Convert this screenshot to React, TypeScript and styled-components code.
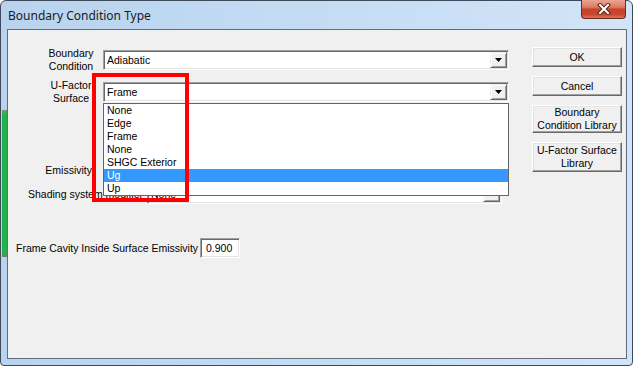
import React from 'react';
import styled, { createGlobalStyle } from 'styled-components';

const GlobalStyle = createGlobalStyle`
  html, body {
    margin: 0;
    padding: 0;
    width: 633px;
    height: 366px;
    overflow: hidden;
    background: #ffffff;
  }
  * {
    box-sizing: border-box;
  }
`;

const Window = styled.div`
  width: 633px;
  height: 366px;
  display: flex;
  flex-direction: column;
  padding-bottom: 6px;
  border: 1px solid #3d4a5a;
  border-radius: 6px 6px 4px 4px;
  background: linear-gradient(to right, #b9d3ee 0%, #c3dbf3 45%, #d2e5f8 100%);
  font-family: 'Liberation Sans', Arial, sans-serif;
  font-size: 10.5px;
  color: #000;
`;

const TitleBar = styled.div`
  height: 28px;
  display: flex;
  align-items: flex-start;
  padding-left: 7px;
`;

const Title = styled.div`
  font-family: 'Noto Sans', 'Open Sans', sans-serif;
  font-size: 12px;
  line-height: 16px;
  margin-top: 7px;
  color: #1a1a1a;
`;

const CloseButton = styled.div`
  margin-left: auto;
  margin-right: 6px;
  width: 45px;
  height: 19px;
  margin-top: -1px;
  border: 1px solid #6b2a20;
  border-top: none;
  border-radius: 0 0 4px 4px;
  background: linear-gradient(
    #eaa593 0%,
    #dd7a62 40%,
    #c7432c 52%,
    #c84630 80%,
    #dd7455 100%
  );
  display: flex;
  align-items: center;
  justify-content: center;
`;

const Middle = styled.div`
  flex: 1;
  display: flex;
`;

const SideFrame = styled.div<{ $w: number }>`
  width: ${(p) => p.$w}px;
  flex-shrink: 0;
`;

const GlassStrip = styled.div`
  margin-top: 81px;
  margin-left: 1px;
  width: 5px;
  height: 147px;
  background: linear-gradient(
    #8d8a80 0px,
    #22b14c 5px,
    #22b14c calc(100% - 6px),
    #6f7d72 100%
  );
`;

const Client = styled.div`
  flex: 1;
  display: flex;
  border: 1px solid #5f6d7c;
  background: #f0f0f0;
`;

const Form = styled.div`
  flex: 1;
  padding-top: 20px;
  display: flex;
  flex-direction: column;
`;

const Row = styled.div<{ $top: number; $indent: number; $gap: number }>`
  display: flex;
  align-items: center;
  height: 20px;
  margin-top: ${(p) => p.$top}px;
  padding-left: ${(p) => p.$indent}px;
  gap: ${(p) => p.$gap}px;
`;

const Label = styled.div<{ $w: number; $align?: string }>`
  width: ${(p) => p.$w}px;
  flex-shrink: 0;
  text-align: ${(p) => p.$align || 'left'};
  line-height: 13px;
  white-space: nowrap;
`;

const FieldWrap = styled.div`
  position: relative;
  height: 100%;
`;

const Field = styled.div<{ $w: number }>`
  width: ${(p) => p.$w}px;
  height: 100%;
  display: flex;
  align-items: stretch;
  padding: 1px;
  border: 1px solid;
  border-color: #a0a0a0 #ffffff #ffffff #a0a0a0;
  box-shadow: inset 1px 1px 0 #696969, inset -1px -1px 0 #e3e3e3;
  background: #ffffff;
`;

const FieldText = styled.div<{ $pad?: number }>`
  flex: 1;
  padding-left: ${(p) => p.$pad ?? 2}px;
  line-height: 16px;
  white-space: nowrap;
  overflow: hidden;
`;

const DropButton = styled.div`
  width: 17px;
  flex-shrink: 0;
  border: 1px solid;
  border-color: #f0f0f0 #696969 #696969 #f0f0f0;
  box-shadow: inset 1px 1px 0 #ffffff, inset -1px -1px 0 #a0a0a0;
  background: #f0f0f0;
  display: flex;
  align-items: center;
  justify-content: center;
`;

const DropList = styled.div`
  position: absolute;
  top: calc(100% + 1px);
  left: 0;
  width: 406px;
  border: 1px solid #646464;
  background: #ffffff;
  z-index: 2;
`;

const ListItem = styled.div<{ $selected?: boolean }>`
  height: 13px;
  line-height: 13px;
  padding-left: 3px;
  white-space: nowrap;
  background: ${(p) => (p.$selected ? '#3399ff' : 'transparent')};
  color: ${(p) => (p.$selected ? '#ffffff' : '#000000')};
`;

const Highlight = styled.div`
  position: absolute;
  left: -11px;
  top: -9px;
  width: 97px;
  height: 129px;
  border: 4px solid #ff0000;
  z-index: 3;
  pointer-events: none;
`;

const ButtonColumn = styled.div`
  width: 90px;
  margin-right: 4px;
  padding-top: 17px;
  display: flex;
  flex-direction: column;
  gap: 9px;
`;

const DialogButton = styled.div<{ $h: number }>`
  height: ${(p) => p.$h}px;
  display: flex;
  align-items: center;
  justify-content: center;
  text-align: center;
  line-height: 13px;
  font-size: 10.5px;
  border: 1px solid;
  border-color: #ffffff #696969 #696969 #ffffff;
  box-shadow: inset -1px -1px 0 #a0a0a0, inset 1px 1px 0 #e3e3e3;
  background: #f0f0f0;
`;

const Arrow = () => (
  <svg width="7" height="4" viewBox="0 0 7 4">
    <polygon points="0,0 7,0 3.5,4" fill="#000" />
  </svg>
);

const CloseGlyph = () => (
  <svg width="14" height="12" viewBox="0 0 14 12">
    <path d="M3 2 L11 10 M11 2 L3 10" stroke="#5a2418" strokeWidth="4" strokeLinecap="square" />
    <path d="M3 2 L11 10 M11 2 L3 10" stroke="#ffffff" strokeWidth="2" strokeLinecap="square" />
  </svg>
);

interface ComboProps {
  width: number;
  value: string;
}

const Combo = ({ width, value }: ComboProps) => (
  <Field $w={width}>
    <FieldText>{value}</FieldText>
    <DropButton>
      <Arrow />
    </DropButton>
  </Field>
);

const surfaces = ['None', 'Edge', 'Frame', 'None', 'SHGC Exterior', 'Ug', 'Up'];

const App = () => {
  return (
    <>
      <GlobalStyle />
      <Window>
        <TitleBar>
          <Title>Boundary Condition Type</Title>
          <CloseButton>
            <CloseGlyph />
          </CloseButton>
        </TitleBar>
        <Middle>
          <SideFrame $w={6}>
            <GlassStrip />
          </SideFrame>
          <Client>
            <Form>
              <Row $top={0} $indent={35} $gap={4}>
                <Label $w={56} $align="center">
                  Boundary
                  <br />
                  Condition
                </Label>
                <FieldWrap>
                  <Combo width={406} value="Adiabatic" />
                </FieldWrap>
              </Row>
              <Row $top={12} $indent={35} $gap={4}>
                <Label $w={56} $align="center">
                  U-Factor
                  <br />
                  Surface
                </Label>
                <FieldWrap>
                  <Combo width={406} value="Frame" />
                  <DropList>
                    {surfaces.map((s, i) => (
                      <ListItem key={i} $selected={s === 'Ug'}>
                        {s}
                      </ListItem>
                    ))}
                  </DropList>
                  <Highlight />
                </FieldWrap>
              </Row>
              <Row $top={58} $indent={0} $gap={11}>
                <Label $w={84} $align="right">
                  Emissivity
                </Label>
                <FieldWrap>
                  <Field $w={60} />
                </FieldWrap>
              </Row>
              <Row $top={4} $indent={20} $gap={2}>
                <Label $w={117}>Shading system modifier</Label>
                <FieldWrap>
                  <Combo width={355} value="None" />
                </FieldWrap>
              </Row>
              <Row $top={34} $indent={8} $gap={4}>
                <Label $w={180}>Frame Cavity Inside Surface Emissivity</Label>
                <FieldWrap>
                  <Field $w={40}>
                    <FieldText $pad={4}>0.900</FieldText>
                  </Field>
                </FieldWrap>
              </Row>
            </Form>
            <ButtonColumn>
              <DialogButton $h={20}>OK</DialogButton>
              <DialogButton $h={20}>Cancel</DialogButton>
              <DialogButton $h={28}>
                Boundary
                <br />
                Condition Library
              </DialogButton>
              <DialogButton $h={30}>
                U-Factor Surface
                <br />
                Library
              </DialogButton>
            </ButtonColumn>
          </Client>
          <SideFrame $w={5} />
        </Middle>
      </Window>
    </>
  );
};

export default App;
